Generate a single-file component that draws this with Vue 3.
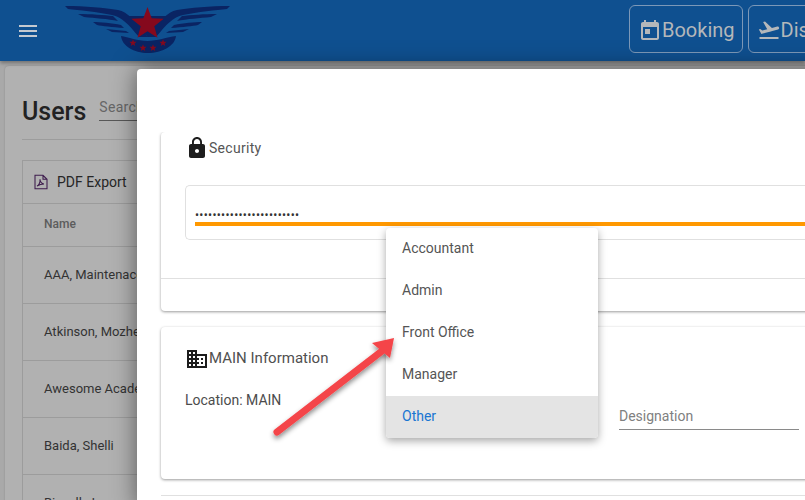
<template>
  <div class="page">
    <header class="topbar">
      <button class="menu-btn" aria-label="Menu">
        <svg viewBox="0 0 24 24" width="24" height="24"><path d="M3 18h18v-2H3v2zm0-5h18v-2H3v2zm0-7v2h18V6H3z" /></svg>
      </button>
      <svg class="logo" viewBox="65 5 170 52" width="170" height="52">
        <g fill="#0a2463">
          <g>
            <path d="M65 7C85 7 105 9 118 11 128 13 135 22 148 38L139 38C128 25 122 18 112 16 98 13 78 11 68 10Z" />
            <path d="M78 15C90 15 105 16 113 17L118 22C108 20 95 19 84 18Z" />
            <path d="M93 23C100 23 112 24 121 26L124 29C112 28 102 27 97 26Z" />
            <path d="M106 30L126 32 129 34 112 33Z" />
          </g>
          <g transform="matrix(-1 0 0 1 295 0)">
            <path d="M65 7C85 7 105 9 118 11 128 13 135 22 148 38L139 38C128 25 122 18 112 16 98 13 78 11 68 10Z" />
            <path d="M78 15C90 15 105 16 113 17L118 22C108 20 95 19 84 18Z" />
            <path d="M93 23C100 23 112 24 121 26L124 29C112 28 102 27 97 26Z" />
            <path d="M106 30L126 32 129 34 112 33Z" />
          </g>
          <path d="M128 17L167 17 148 38Z" />
          <path d="M121 37C128 38 138 42 147.500 42 157 42 167 38 176 37 175 47 162 54 148 54 134 54 122 47 121 37Z" />
        </g>
        <g fill="#85091d">
          <polygon v-for="s in stars" :key="s.x" :points="starPoints(s)" />
        </g>
      </svg>
      <div class="top-actions">
        <button class="top-btn">
          <svg viewBox="0 0 24 24" width="24" height="24"><path d="M19 4h-1V2h-2v2H8V2H6v2H5c-1.100 0-2 .9-2 2v14c0 1.100.9 2 2 2h14c1.100 0 2-.9 2-2V6c0-1.100-.9-2-2-2zm0 16H5V9h14v11zM7 11h5v5H7z" /></svg>
          Booking
        </button>
        <button class="top-btn">
          <svg viewBox="0 0 24 24" width="24" height="24"><path d="M2.500 19h19v2h-19v-2zm19.570-9.360c-.21-.8-1.040-1.280-1.840-1.060L14.920 10l-6.900-6.430-1.930.51 4.140 7.170-4.970 1.330-1.970-1.540-1.450.39 2.590 4.490s7.120-1.900 16.570-4.430c.81-.23 1.280-1.050 1.070-1.850z" /></svg>
          Dispatch
        </button>
      </div>
    </header>

    <main class="content">
      <section class="users-card">
        <div class="users-head">
          <h1>Users</h1>
          <div class="search">Search</div>
        </div>
        <div class="table">
          <div class="tool-row">
            <svg viewBox="0 0 24 24" width="16" height="16"><path fill="none" stroke="#3f1d4e" stroke-width="1.600" d="M3 2h12l6 6v14H3zM15 2v6h6M6 18c3-1 5-6 4.500-10 0 4 3 7 6 7-4 0-7 1-10.500 3z" /></svg>
            PDF Export
          </div>
          <div class="col-row">Name</div>
          <div v-for="name in names" :key="name" class="user-row">{{ name }}</div>
        </div>
      </section>
    </main>

    <div class="dialog">
      <div class="dialog-top"></div>
      <div class="dialog-body">
        <section class="panel security">
          <h2 class="panel-title">
            <svg viewBox="0 0 24 24" width="24" height="24"><path d="M18 8h-1V6c0-2.760-2.240-5-5-5S7 3.240 7 6v2H6c-1.100 0-2 .9-2 2v10c0 1.100.9 2 2 2h12c1.100 0 2-.9 2-2V10c0-1.100-.9-2-2-2zm-6 9c-1.100 0-2-.9-2-2s.9-2 2-2 2 .9 2 2-.9 2-2 2zm3.100-9H8.900V6c0-1.710 1.390-3.100 3.100-3.100 1.710 0 3.100 1.390 3.100 3.100v2z" /></svg>
            Security
          </h2>
          <div class="password-box">
            <div class="dots">••••••••••••••••••••••••</div>
            <div class="strength"></div>
          </div>
          <div class="panel-foot"></div>
        </section>

        <section class="panel info">
          <h2 class="panel-title">
            <svg viewBox="0 0 24 24" width="24" height="24"><path d="M12 7V3H2v18h20V7H12zM6 19H4v-2h2v2zm0-4H4v-2h2v2zm0-4H4V9h2v2zm0-4H4V5h2v2zm4 12H8v-2h2v2zm0-4H8v-2h2v2zm0-4H8V9h2v2zm0-4H8V5h2v2zm10 12h-8v-2h2v-2h-2v-2h2v-2h-2V9h8v10zm-2-8h-2v2h2v-2zm0 4h-2v2h2v-2z" /></svg>
            MAIN Information
          </h2>
          <div class="info-row">
            <div class="location">Location: MAIN</div>
            <div class="designation">Designation</div>
          </div>
        </section>

        <div class="next-rule"></div>
      </div>
    </div>

    <ul class="menu">
      <li v-for="role in roles" :key="role" :class="{ active: role === 'Other' }">{{ role }}</li>
    </ul>

    <svg class="arrow" viewBox="0 0 805 500" width="805" height="500">
      <defs>
        <filter id="arrow-shadow" x="-20%" y="-20%" width="150%" height="150%">
          <feDropShadow dx="0" dy="3" stdDeviation="2.500" flood-color="#000" flood-opacity=".45" />
        </filter>
      </defs>
      <g filter="url(#arrow-shadow)">
        <path d="M277 432L382 351" stroke="#f44549" stroke-width="7" stroke-linecap="round" fill="none" />
        <path d="M394 338L372 343L390 358Z" fill="#f44549" />
      </g>
    </svg>
  </div>
</template>

<script setup>
const names = ['AAA, Maintenace', 'Atkinson, Mozhe', 'Awesome Academy', 'Baida, Shelli', 'Bissell, Joe']
const roles = ['Accountant', 'Admin', 'Front Office', 'Manager', 'Other']
const stars = [
  { x: 147.5, y: 25, r: 17 },
  { x: 133, y: 44, r: 3.8 },
  { x: 143, y: 49, r: 3.8 },
  { x: 153, y: 49, r: 3.8 },
  { x: 163, y: 44, r: 3.8 }
]

function starPoints(s) {
  const pts = []
  for (let i = 0; i < 10; i++) {
    const r = i % 2 ? s.r * 0.42 : s.r
    const a = -Math.PI / 2 + (i * Math.PI) / 5
    pts.push(`${s.x + r * Math.cos(a)},${s.y + r * Math.sin(a)}`)
  }
  return pts.join(' ')
}
</script>

<style>
html, body {
  margin: 0;
  overflow: hidden;
}
</style>

<style scoped>
.page {
  position: relative;
  width: 805px;
  height: 500px;
  overflow: hidden;
  background: #a9a9a9;
  font-family: Roboto, "Liberation Sans", sans-serif;
  color: #3c3c3c;
}

.topbar {
  display: flex;
  align-items: center;
  height: 61px;
  padding-left: 16px;
  background: #0f5090;
  box-shadow: 0 2px 4px rgba(0, 0, 0, .35);
  position: relative;
}

.menu-btn {
  width: 24px;
  height: 24px;
  padding: 0;
  border: 0;
  background: none;
  fill: #c4c9d0;
}

.logo {
  margin-left: 25px;
  margin-top: -1px;
  flex: none;
}

.top-actions {
  display: flex;
  gap: 5px;
  margin-left: 394px;
  margin-top: -3px;
  flex: none;
}

.top-btn {
  display: flex;
  align-items: center;
  height: 48px;
  padding: 2px 7px 0 8px;
  border: 1px solid #7c98b8;
  border-radius: 6px;
  background: none;
  color: #b4b7ba;
  fill: #b4b7ba;
  font-family: inherit;
  font-size: 20px;
  white-space: nowrap;
}

.content {
  padding: 5px 0 0 5px;
}

.users-card {
  width: 900px;
  height: 500px;
  padding: 0 17px;
  background: #b1b1b1;
  border-radius: 4px;
  box-shadow: 0 0 2px rgba(0, 0, 0, .2);
}

.users-head {
  display: flex;
  align-items: flex-start;
  gap: 13px;
  height: 74px;
  border-bottom: 1px solid #9c9c9c;
  box-sizing: border-box;
  padding-top: 29px;
}

.users-head h1 {
  margin: 1px 0 0;
  font-size: 25px;
  line-height: 32px;
  font-weight: 500;
  color: #222;
}

.search {
  width: 200px;
  height: 26px;
  border-bottom: 1px solid #585858;
  font-size: 14px;
  line-height: 20px;
  color: #666;
  box-sizing: border-box;
  padding-top: 2px;
  letter-spacing: .3px;
}

.table {
  margin-top: 20px;
  border: 1px solid #9c9c9c;
  border-bottom: 0;
}

.tool-row {
  display: flex;
  align-items: center;
  gap: 8px;
  height: 42px;
  padding-left: 10px;
  border-bottom: 1px solid #9c9c9c;
  font-size: 14px;
  color: #262626;
}

.col-row {
  display: flex;
  align-items: center;
  height: 40px;
  padding: 0 0 2px 21px;
  border-bottom: 1px solid #9c9c9c;
  font-size: 12px;
  line-height: 16px;
  font-weight: 500;
  color: #5c5c5c;
}

.user-row {
  display: flex;
  align-items: center;
  height: 55px;
  padding: 0 0 1px 21px;
  border-bottom: 1px solid #9c9c9c;
  font-size: 13px;
  line-height: 16px;
  color: #333;
  white-space: nowrap;
}

.dialog {
  position: absolute;
  left: 137px;
  top: 69px;
  width: 760px;
  height: 440px;
  background: #fff;
  border-radius: 4px 0 0 0;
  box-shadow: 0 0 24px rgba(0, 0, 0, .5);
}

.dialog-top {
  height: 63px;
}

.dialog-body {
  padding: 0 0 8px 24px;
  overflow: hidden;
}

.panel {
  background: #fff;
  border-radius: 4px;
  box-shadow: 0 1px 3px rgba(0, 0, 0, .4);
}

.security {
  height: 179px;
  padding: 1px 0 0 24px;
  box-sizing: border-box;
  display: flex;
  flex-direction: column;
}

.panel-title {
  display: flex;
  align-items: center;
  margin: 0;
  font-size: 14px;
  line-height: 20px;
  font-weight: 400;
  letter-spacing: .3px;
  color: #555;
  fill: #1d1d1d;
}

.security .panel-title {
  margin: 3px 0 0 0;
  height: 24px;
}

.password-box {
  margin-top: 25px;
  height: 55px;
  box-sizing: border-box;
  border: 1px solid #e0e0e0;
  border-right: 0;
  border-radius: 5px 0 0 5px;
  padding: 22px 0 0 9px;
}

.dots {
  font-size: 12px;
  line-height: 14px;
  letter-spacing: .3px;
  color: #333;
  height: 14px;
  overflow: hidden;
  white-space: nowrap;
}

.strength {
  height: 4px;
  background: #ff9800;
}

.panel-foot {
  margin: 38px 0 0 -24px;
  border-top: 1px solid #e0e0e0;
}

.info {
  margin-top: 16px;
  height: 152px;
  padding: 19px 0 0 24px;
  box-sizing: border-box;
}

.info .panel-title {
  font-size: 15px;
  height: 24px;
  letter-spacing: 0;
  color: #505050;
}

.info .panel-title svg {
  margin-top: 2px;
}

.info-row {
  display: flex;
  align-items: flex-start;
  margin-top: 20px;
}

.location {
  font-size: 14px;
  line-height: 20px;
  width: 434px;
  color: #4c4c4c;
}

.designation {
  width: 180px;
  height: 26px;
  margin-top: 14px;
  border-bottom: 1px solid #8a8a8a;
  box-sizing: border-box;
  font-size: 14px;
  line-height: 20px;
  color: #808080;
  padding-top: 2px;
}

.next-rule {
  margin-top: 16px;
  border-top: 1px solid #e0e0e0;
}

.menu {
  position: absolute;
  left: 386px;
  top: 228px;
  width: 212px;
  margin: 0;
  padding: 0;
  list-style: none;
  background: #fff;
  border-radius: 4px;
  overflow: hidden;
  box-shadow: 0 3px 8px rgba(0, 0, 0, .35);
}

.menu li {
  display: flex;
  align-items: center;
  height: 42px;
  box-sizing: border-box;
  padding: 0 0 2px 16px;
  font-size: 14px;
  color: #555;
}

.menu li.active {
  background: #e4e4e4;
  color: #1976d2;
}

.arrow {
  position: absolute;
  left: 0;
  top: 0;
  pointer-events: none;
}
</style>
